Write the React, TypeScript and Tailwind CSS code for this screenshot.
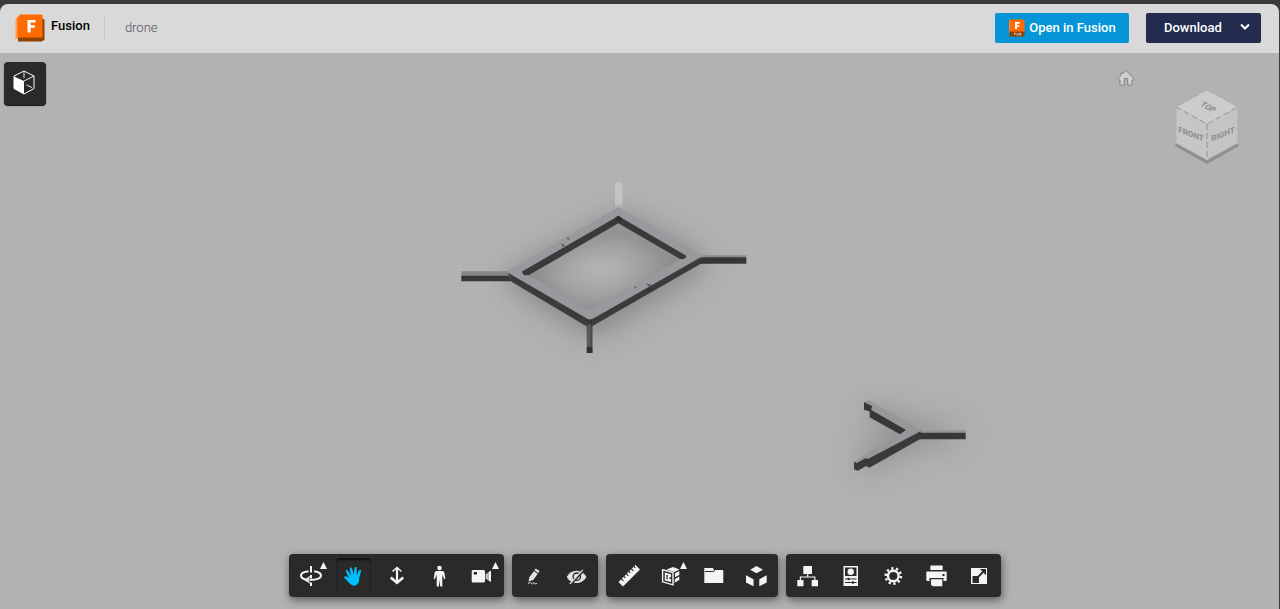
import React, { type ReactNode } from "react";

function FusionLogo() {
  return (
    <svg viewBox="0 0 30 28" className="h-7 w-[30px]" aria-hidden="true">
      <path d="M0.5 5 5 0.500V22L0.500 26Z" fill="#ff9a55" />
      <path d="M4 22H27V25.500A2 2 0 0 1 25 27.500H3V24Z" fill="#8f4005" />
      <path d="M26 4 29.500 5.500V26L26 27.500H25V22Z" fill="#8f4005" />
      <path d="M5 .500H26.500A1 1 0 0 1 27.500 1.500V23.500H2.500V4Z" fill="#ff6b00" />
      <path d="M12.500 6H20.500V8.600H15.600V11.300H19.700V13.800H15.600V18.500H12.500Z" fill="#fff" />
    </svg>
  );
}

function FusionBadge() {
  return (
    <svg viewBox="0 0 17 18" className="h-[18px] w-[17px]" aria-hidden="true">
      <path d="M1 2 3 .5V12L1 14Z" fill="#ff9a55" />
      <path d="M2.500 .500H15.500A1 1 0 0 1 16.500 1.500V13H1.500V1.500Z" fill="#ff6b00" />
      <path d="M1.500 12.500H16.500V16.500A1 1 0 0 1 15.500 17.500H2.500A1 1 0 0 1 1.500 16.500Z" fill="#8f4005" />
      <path d="M7 3H11.800V4.700H9V6.200H11.400V7.800H9V10H7Z" fill="#fff" />
      <path d="M6 14.300H8M6.500 14.300V16M9 14.300V16H10.300V14.300M11.500 16H13V15H11.700V14.300H13" fill="none" stroke="#fff" strokeWidth=".6" />
    </svg>
  );
}

function Icon({ children }: { children: ReactNode }) {
  return (
    <svg viewBox="0 0 25 25" className="size-[25px]" fill="currentColor" aria-hidden="true">
      {children}
    </svg>
  );
}

const orbit = (
  <Icon>
    <path d="M13 3V9.500M13 12V15.500M13 19.500V23" stroke="currentColor" strokeWidth="2" fill="none" />
    <path d="M10.500 8.200C5.500 8.700 3 10.500 3 12.500C3 14.700 5.500 16.300 9 16.900M16 8.200C20.500 8.800 23 10.500 23 12.500C23 15 19 16.900 11.500 17.100" stroke="currentColor" strokeWidth="2" fill="none" />
    <path d="M12.500 12.500 6.300 16.900 12.500 21 10.500 17Z" />
  </Icon>
);

const hand = (
  <Icon>
    <path d="M10 21.600C7.500 19.500 5.800 17 3.500 14.900C2.500 13.900 3.700 12.700 5 13.300L8 15.200L5 8.700C4.400 7.200 6.200 6.400 7 7.800L10 12.700L8.800 5.900C8.600 4.300 10.700 3.900 11.100 5.500L12.800 12L13.500 5C13.700 3.500 15.700 3.600 15.700 5.200L15.600 12.300L18 7.500C18.700 6.100 20.500 6.900 20 8.400L18.300 14.500C18.500 18.300 17.300 21 15 22.200C13.200 23.100 11.200 22.700 10 21.600Z" />
  </Icon>
);

const dolly = (
  <Icon>
    <path d="M13 5V19" stroke="currentColor" strokeWidth="2.200" />
    <path d="M8.500 8.500 13 4.500 17.500 8.500" stroke="currentColor" strokeWidth="1.500" fill="none" />
    <path d="M6.800 14.500 13 19.800 19.200 14.500" stroke="currentColor" strokeWidth="2.600" fill="none" />
  </Icon>
);

const walk = (
  <Icon>
    <circle cx="12.500" cy="5" r="2.300" />
    <path d="M9.500 8H15.500Q17 8 17.300 9.500L18.300 15.500 17.300 16.200 15.300 11.500V23.500H13.200L12.500 17 11.800 23.500H9.700V11.500L7.800 16.200 6.700 15.500 7.700 9.500Q8 8 9.500 8Z" />
  </Icon>
);

const camera = (
  <Icon>
    <path fillRule="evenodd" d="M3 7H13.500Q15 7 15 8.500V18Q15 19.500 13.500 19.500H3Q1.700 19.500 1.700 18V8.500Q1.700 7 3 7ZM3.700 9V11.500H7V9Z" />
    <path d="M15.500 11.500 18.800 9V17.700L15.500 15.500Z" fill="#bdbdbd" />
    <path d="M18.800 9 21 7.500V19L18.800 17.700Z" />
  </Icon>
);

const markup = (
  <Icon>
    <path d="M14.700 5.500 18.500 8 17.300 9.900 13.500 7.400ZM12.900 8.300 16.700 10.800 12.200 17 7.500 18.500 8.300 14.300Z" fill="#e2e2e2" />
    <path d="M7 20.500 9.500 19.300 11.300 21 13 19.500 14.200 21 16 20.500" stroke="#e2e2e2" fill="none" />
  </Icon>
);

const hide = (
  <Icon>
    <path d="M2.700 14C5 10 8.500 7.800 12.500 7.800S20 10 22.500 14C20 18 16.500 20 12.500 20S5 18 2.700 14Z" fill="#e2e2e2" />
    <circle cx="12.800" cy="13.700" r="3.700" fill="none" stroke="#2a2a2a" strokeWidth="1.300" />
    <path d="M19.500 7.500 6.500 21.500" stroke="#2a2a2a" strokeWidth="2.400" />
    <path d="M18.800 6.800 5.800 21" stroke="#e2e2e2" strokeWidth="1.200" />
  </Icon>
);

const ruler = (
  <Icon>
    <path d="M20.500 2 25 6.500 8 23.500 3.500 19Z" />
    <path d="m6.500 16 1.800 1.800M9 13.500l1.300 1.300M11.500 11l1.800 1.800M14 8.500l1.300 1.300M16.500 6l1.800 1.800M19 3.500l1.300 1.300" stroke="#2a2a2a" strokeWidth="1.100" />
  </Icon>
);

const section = (
  <Icon>
    <path d="M8.500 6.500 15 4 21.500 6.500 16.500 9ZM17 10.200 21.300 8V12L17 14.200ZM17 16 21.300 13.500V17L16.500 19.800Z" />
    <path d="M4.600 6.800 15 9.500V21.800L4.600 18.800Z" fill="#2a2a2a" stroke="currentColor" strokeWidth="1.400" />
    <path d="M7.600 10.700 12.200 11.800V13.300H10.500V16.500H12.200V18L7.600 16.800Z" fill="none" stroke="currentColor" strokeWidth="1.700" />
  </Icon>
);

const folder = (
  <Icon>
    <path d="M3.300 5H12L13 7H21Q22.300 7 22.300 8V20H3.300Z" />
    <path d="M4 8.500H12.700L14.300 6.500" fill="none" stroke="#2a2a2a" />
  </Icon>
);

const explode = (
  <Icon>
    <path d="M12.500 3 19 6.700 12.500 10.300 6.200 6.700Z" />
    <path d="M2 12.300 9.500 16.300V23.300L2 19.500ZM15.300 16.300 22.700 12.300V19.500L15.300 23.300Z" />
  </Icon>
);

const tree = (
  <Icon>
    <path d="M8.300 3H17V11H8.300ZM2.300 17H8.500V23.300H2.300ZM16.700 17H23V23.300H16.700Z" />
    <path d="M12.700 11V14M5.400 17V14H19.800V17" fill="none" stroke="currentColor" strokeWidth="1.200" />
  </Icon>
);

const properties = (
  <Icon>
    <path d="M5.500 3H20V23H5.500Z" />
    <path d="M7 4.500H18.500V13H7Z" fill="#2a2a2a" />
    <circle cx="12.700" cy="8.800" r="3.200" />
    <path d="M7 16H18.500M7 19.500H18.500" stroke="#2a2a2a" strokeWidth="1.200" />
    <path d="M10.500 14.700V17.300M15 18.200V20.800" stroke="#2a2a2a" strokeWidth="1.800" />
  </Icon>
);

const settings = (
  <Icon>
    <circle cx="12.300" cy="13" r="5.300" fill="none" stroke="currentColor" strokeWidth="2.400" />
    <circle cx="12.300" cy="13" r="7.600" fill="none" stroke="currentColor" strokeWidth="2.600" strokeDasharray="2.300 2.475" />
  </Icon>
);

const printer = (
  <Icon>
    <path d="M7 2.500H18Q18.700 2.500 18.700 3.500V7H6.300V3.500Q6.300 2.500 7 2.500Z" />
    <path fillRule="evenodd" d="M3 8.500H22Q22.700 8.500 22.700 9.500V17Q22.700 18 21.500 18H19.500V15H5.500V18H3.500Q2.300 18 2.300 17V9.500Q2.300 8.500 3 8.500ZM18.500 11V13H20.500V11Z" />
    <path d="M7 16.300H18.300V23.300H8.500L7 21.500Z" />
  </Icon>
);

const fullscreen = (
  <Icon>
    <path d="M4 5H20V21H4Z" />
    <path d="M5.500 13H12V20H5.500Z" fill="#2a2a2a" />
    <path d="M10.500 14.500 16.500 8.500" stroke="#2a2a2a" strokeWidth="2" />
    <path d="M12.800 6H19V12.200L17 10.300 15 8Z" fill="#2a2a2a" />
  </Icon>
);

type Tool = { label: string; icon: ReactNode; menu?: boolean; active?: boolean };

const groups: { name: string; tools: Tool[] }[] = [
  {
    name: "Navigation",
    tools: [
      { label: "Orbit", icon: orbit, menu: true },
      { label: "Pan", icon: hand, active: true },
      { label: "Zoom", icon: dolly },
      { label: "First person", icon: walk },
      { label: "Camera interactions", icon: camera, menu: true },
    ],
  },
  {
    name: "Review",
    tools: [
      { label: "Markup", icon: markup },
      { label: "Hide markup", icon: hide },
    ],
  },
  {
    name: "Model",
    tools: [
      { label: "Measure", icon: ruler },
      { label: "Section analysis", icon: section, menu: true },
      { label: "Document browser", icon: folder },
      { label: "Explode model", icon: explode },
    ],
  },
  {
    name: "Settings",
    tools: [
      { label: "Model browser", icon: tree },
      { label: "Properties", icon: properties },
      { label: "Settings", icon: settings },
      { label: "Print", icon: printer },
      { label: "Full screen", icon: fullscreen },
    ],
  },
];

function ToolButton({ label, icon, menu, active }: Tool) {
  return (
    <button
      type="button"
      aria-label={label}
      aria-pressed={active}
      className="relative flex size-[43px] items-center justify-center text-[#f4f4f4]"
    >
      <span
        className={
          active
            ? "flex size-[35px] items-center justify-center rounded-t-sm text-[#00bfff] shadow-[inset_0_2px_2px_#101010]"
            : "flex size-[35px] items-center justify-center"
        }
      >
        {icon}
      </span>
      {menu && (
        <svg viewBox="0 0 7 7" className="absolute top-2 right-[5px] size-[7px]" aria-hidden="true">
          <path d="M3.500 0 7 7H0Z" fill="#f4f4f4" />
        </svg>
      )}
    </button>
  );
}

function Scene() {
  return (
    <svg
      viewBox="0 53 1279 556"
      preserveAspectRatio="xMidYMid slice"
      className="absolute inset-0 size-full"
      role="img"
      aria-label="Drone frame model"
    >
      <defs>
        <filter id="wide" x="-50%" y="-50%" width="200%" height="200%">
          <feGaussianBlur stdDeviation="60" />
        </filter>
        <filter id="near" x="-50%" y="-50%" width="200%" height="200%">
          <feGaussianBlur stdDeviation="32" />
        </filter>
        <radialGradient id="inner">
          <stop offset="0" stopColor="#b4b4b4" stopOpacity="1" />
          <stop offset=".3" stopColor="#b2b2b2" stopOpacity=".8" />
          <stop offset="1" stopColor="#b2b2b2" stopOpacity="0" />
        </radialGradient>
        <linearGradient id="post" x1="0" x2="0" y1="0" y2="1">
          <stop offset="0" stopColor="#c3c3c7" />
          <stop offset=".8" stopColor="#c3c3c7" />
          <stop offset="1" stopColor="#a3a3a6" />
        </linearGradient>
      </defs>

      <g transform="translate(440 160) scale(.33333)">
        <path d="M190 360 545 170 830 310 460 540Z" fill="#555" opacity=".26" filter="url(#wide)" />
        <path d="M235 355 550 190 760 305 455 490Z" fill="none" stroke="#555" strokeWidth="36" opacity=".45" filter="url(#near)" />
        <ellipse cx="480" cy="330" rx="180" ry="110" fill="url(#inner)" />

        <path d="M525 67H547V146H525Z" fill="url(#post)" />
        <path d="M64 334H204L214 348H64Z" fill="#858687" />
        <path d="M64 347H206L216 364H64Z" fill="#363838" />
        <path d="M770 286H919V293H770Z" fill="#8b8c8d" />
        <path d="M776 292H919V311H776Z" fill="#363838" />

        <path
          fillRule="evenodd"
          d="M200 335 535 142 790 288 785 296 448 482 205 344ZM245 335 268 347 448 450 740 289 535 168Z"
          fill="#98999c"
        />
        <path d="M245 335 535 168V190L266 346H252Z" fill="#393b3a" />
        <path d="M535 168 740 288 733 297H720L535 190Z" fill="#393b3a" />
        <path d="M203 338 442 476V500L216 366Z" fill="#3a3c3b" />
        <path d="M456 478 785 290V310L456 499Z" fill="#3a3c3b" />
        <path d="M439 478H457V579H441Z" fill="#57595a" />
        <path d="M452 482H457V578H452Z" fill="#464849" />
        <path d="M440 561 457 561V579H440Z" fill="#303231" />
        <path d="M525 173 535 167 546 174 537 190Z" fill="#2e302f" />
        <path d="M440 476 448 481 457 476V499L448 490 440 499Z" fill="#333534" />
        <path d="M380 231 390 236 384 240ZM363 249 376 257 368 260ZM583 379 591 383 586 386ZM618 370 636 376 628 380Z" fill="#555759" />
        <path d="M628 382V392" stroke="#252726" strokeWidth="3" />
      </g>

      <g transform="translate(800 370) scale(.33333)">
        <path d="M170 100 350 160H500V215H380L200 310 140 290 250 200Z" fill="#555" opacity=".26" filter="url(#wide)" />
        <path d="M215 115 335 190 190 275M350 197H430" fill="none" stroke="#555" strokeWidth="30" opacity=".32" filter="url(#near)" />
        <path
          d="M192 96 206 90 350 174 368 180H497V190H367L208 269 194 265 165 279 162 274 303 193 318 182 213 120 215 110Z"
          fill="#96979a"
        />
        <path d="M192 96 217 109 211 125 192 119Z" fill="#363838" />
        <path d="M209 117 318 180 300 193 209 142Z" fill="#363838" />
        <path d="M162 275 170 279 196 265 205 266 362 184V206L208 293 198 288 174 302 162 298Z" fill="#393b3a" />
        <path d="M360 188H497V208H360Z" fill="#363838" />
      </g>
    </svg>
  );
}

function ViewCube() {
  return (
    <svg viewBox="0 0 72 80" className="h-20 w-[72px]" role="img" aria-label="View cube">
      <path d="M5 57 36 74 67 57 68 60 36 78 4 60Z" fill="#8f8f8f" />
      <path d="M36 4 67 21 36 39 5 21Z" fill="#cccccc" />
      <path d="M5 21 36 38V74L5 57Z" fill="#c6c6c6" />
      <path d="M67 21 36 38V74L67 57Z" fill="#c4c4c4" />
      <path d="M36 4 67 21V57L36 74 5 57V21Z" fill="none" stroke="#a8a8a8" strokeWidth=".8" strokeDasharray="7 2" />
      <path d="M5 21 36 38 67 21M36 38V74" fill="none" stroke="#929292" strokeWidth="1" strokeDasharray="6 3" />
      <g fill="#8c8c8c" textAnchor="middle" className="font-['Roboto',sans-serif] text-[8px] font-bold">
        <text transform="translate(35 23) rotate(28) skewX(-20)">TOP</text>
        <text transform="translate(20 51) skewY(20)">FRONT</text>
        <text transform="translate(52 51) skewY(-22)">RIGHT</text>
      </g>
    </svg>
  );
}

export default function App() {
  return (
    <div className="flex h-screen flex-col bg-[#3a3a3b] pt-1 pr-px font-['Roboto','Noto_Sans',sans-serif]">
      <header className="flex h-[49px] shrink-0 items-center rounded-t-lg bg-[#d9d9d9] pr-[18px] pb-px pl-[15px]">
        <a href="#fusion" className="flex items-center gap-1.5">
          <FusionLogo />
          <span className="pb-1 text-[13px] leading-4 font-medium text-black">Fusion</span>
        </a>
        <span className="mr-5 ml-3.5 h-6 w-px bg-[#c9c9c9]" />
        <h1 className="text-[13px] leading-4 font-light text-[#55555c]">drone</h1>
        <div className="ml-auto flex gap-[17px] text-[13px] font-medium text-white">
          <button type="button" className="flex h-[30px] w-[134px] items-center justify-center gap-1 rounded-xs bg-[#0696d7]">
            <FusionBadge />
            <span className="whitespace-nowrap">Open in Fusion</span>
          </button>
          <button type="button" className="flex h-[30px] w-[115px] items-center justify-between rounded-xs bg-[#232c4e] pr-[11px] pl-[18px]">
            Download
            <svg viewBox="0 0 10 8" className="mb-0.5 h-2 w-2.5" aria-hidden="true">
              <path d="M1 1.500 5 5.500 9 1.500" fill="none" stroke="#fff" strokeWidth="2" />
            </svg>
          </button>
        </div>
      </header>

      <main className="relative flex flex-1 flex-col justify-between overflow-hidden bg-[#b2b2b2] pb-3">
        <Scene />

        <div className="relative flex items-start justify-between pt-[9px] pr-9 pl-1">
          <button
            type="button"
            aria-label="Model views"
            className="flex h-[43px] w-[42px] items-center justify-center rounded-sm bg-[#2a2a2a] pr-0.5 pb-0.5 text-white shadow-[0_1px_1px_#111]"
          >
            <svg viewBox="0 0 22 25" className="h-[25px] w-[22px]" aria-hidden="true">
              <path d="M1 6 11 1 21 6V18.500L11 24 1 18.500Z" fill="none" stroke="currentColor" />
              <path d="M1 6.500 11 11V24L1 18.500Z" fill="currentColor" />
              <path d="M11 11 21 6M11 1.500V8M13.500 15 19 17.500" fill="none" stroke="currentColor" strokeWidth=".9" />
            </svg>
          </button>

          <div className="flex items-start gap-9">
            <button type="button" aria-label="Home view" className="mt-[7px]">
              <svg viewBox="0 0 18 18" className="size-[18px]" aria-hidden="true">
                <path
                  d="M9 1.500 17.300 10 16.500 11H15V16.200H10.700V9.500H7.300V16.200H3V11H1.500L.7 10 4 6.500V4H6V4.500Z"
                  fill="#cfcfcf"
                  stroke="#858585"
                />
              </svg>
            </button>
            <div className="mt-6">
              <ViewCube />
            </div>
          </div>
        </div>

        <nav className="relative flex justify-center gap-2 pl-[11px]" aria-label="Viewer tools">
          {groups.map((group) => (
            <div
              key={group.name}
              role="group"
              aria-label={group.name}
              className="flex rounded-sm bg-[#2a2a2a] shadow-[1px_3px_8px_rgba(0,0,0,0.5)]"
            >
              {group.tools.map((tool) => (
                <ToolButton key={tool.label} {...tool} />
              ))}
            </div>
          ))}
        </nav>
      </main>
    </div>
  );
}
